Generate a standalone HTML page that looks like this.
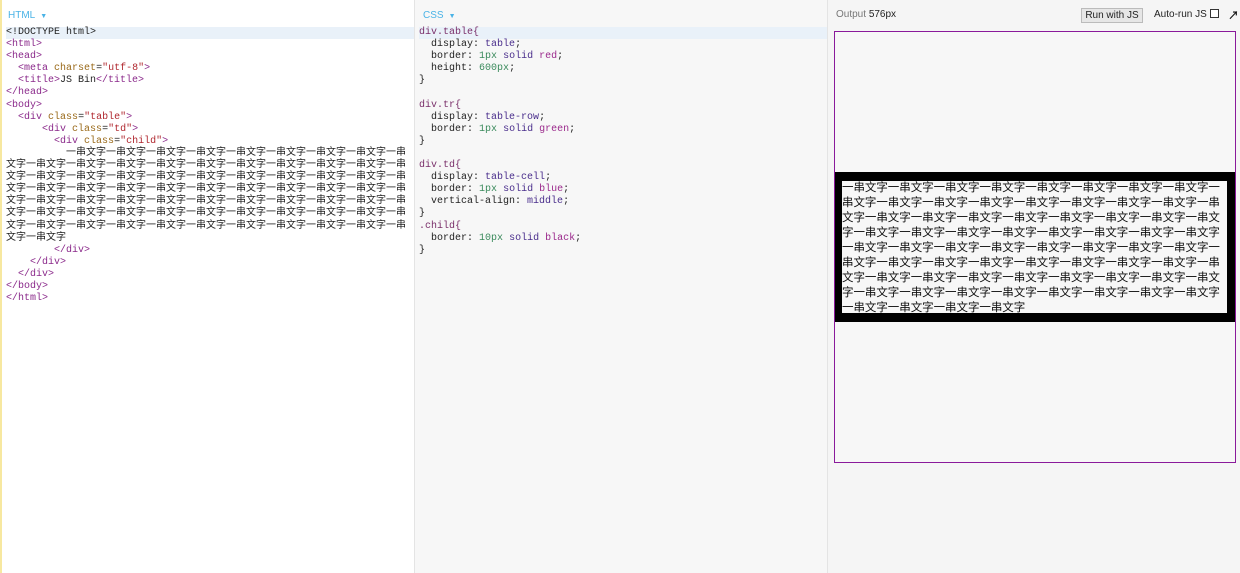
<!DOCTYPE html>
<html><head><meta charset="utf-8">
<style>
*{margin:0;padding:0;box-sizing:border-box}
body{width:1240px;height:573px;overflow:hidden;background:#fff;position:relative;font-family:"Liberation Sans","Noto Sans CJK SC",sans-serif}
.pane{position:absolute;top:0;height:573px}
#h{left:0;width:414px;background:#fff;border-left:2px solid #f7e8a0}
#c{left:414px;width:413px;background:#f7f7f7;border-left:1px solid #e4e4e4}
#o{left:827px;width:413px;background:#f5f5f5;border-left:1px solid #e4e4e4}
.lbl{position:absolute;top:10px;font-size:10px;color:#4ab3e6}
.lbl small{font-size:7px;margin-left:5px}
pre{position:absolute;top:27px;left:0;right:0;font-family:"Liberation Mono","Noto Sans CJK SC",monospace;font-size:10px;line-height:12.1px;color:#222;white-space:pre}
.hl{background:#e9f1f9;display:block}
.t{color:#8b2a8b}.a{color:#9a6a1a}.s{color:#b0282f}
.p{color:#222}.k{color:#4a2e8c}.n{color:#3a8a5c}.v{color:#9b2a8c}.sel{color:#7a2f6a}
.cjk{font-size:10px}
#frame{position:absolute;left:6px;top:31px;width:402px;height:432px;border:1px solid #8a1a9b;background:#f7f7f7}
#child{position:absolute;left:0;top:140px;width:400px;height:150px;border:9px solid #000;border-left-width:7px;border-right-width:8px;background:#f7f7f7;padding:0}
#child div{font-size:11.5px;line-height:15px;white-space:nowrap;color:#111;letter-spacing:-0.05px}
.btn{position:absolute;left:253px;top:8px;width:62px;height:15px;border:1px solid #bbb;background:#e6e6e6;font-size:10px;text-align:center;line-height:13px;color:#222}
</style></head><body>
<div class="pane" id="h">
<div class="lbl" style="left:6px">HTML<small>▼</small></div>
<pre style="left:4px"><span class="hl"><span class="p">&lt;!DOCTYPE html&gt;</span></span><span class="t">&lt;html&gt;</span>
<span class="t">&lt;head&gt;</span>
  <span class="t">&lt;meta</span> <span class="a">charset</span>=<span class="s">"utf-8"</span><span class="t">&gt;</span>
  <span class="t">&lt;title&gt;</span>JS Bin<span class="t">&lt;/title&gt;</span>
<span class="t">&lt;/head&gt;</span>
<span class="t">&lt;body&gt;</span>
  <span class="t">&lt;div</span> <span class="a">class</span>=<span class="s">"table"</span><span class="t">&gt;</span>
      <span class="t">&lt;div</span> <span class="a">class</span>=<span class="s">"td"</span><span class="t">&gt;</span>
        <span class="t">&lt;div</span> <span class="a">class</span>=<span class="s">"child"</span><span class="t">&gt;</span>
          <span class="cjk">一串文字一串文字一串文字一串文字一串文字一串文字一串文字一串文字一串</span>
<span class="cjk">文字一串文字一串文字一串文字一串文字一串文字一串文字一串文字一串文字一串文字一串</span>
<span class="cjk">文字一串文字一串文字一串文字一串文字一串文字一串文字一串文字一串文字一串文字一串</span>
<span class="cjk">文字一串文字一串文字一串文字一串文字一串文字一串文字一串文字一串文字一串文字一串</span>
<span class="cjk">文字一串文字一串文字一串文字一串文字一串文字一串文字一串文字一串文字一串文字一串</span>
<span class="cjk">文字一串文字一串文字一串文字一串文字一串文字一串文字一串文字一串文字一串文字一串</span>
<span class="cjk">文字一串文字一串文字一串文字一串文字一串文字一串文字一串文字一串文字一串文字一串</span>
<span class="cjk">文字一串文字</span>
        <span class="t">&lt;/div&gt;</span>
    <span class="t">&lt;/div&gt;</span>
  <span class="t">&lt;/div&gt;</span>
<span class="t">&lt;/body&gt;</span>
<span class="t">&lt;/html&gt;</span></pre>
</div>
<div class="pane" id="c">
<div class="lbl" style="left:8px">CSS<small>▼</small></div>
<pre style="left:4px"><span class="hl"><span class="sel">div.table{</span></span>  <span class="p">display</span>: <span class="k">table</span>;
  <span class="p">border</span>: <span class="n">1px</span> <span class="k">solid</span> <span class="v">red</span>;
  <span class="p">height</span>: <span class="n">600px</span>;
}

<span class="sel">div.tr{</span>
  <span class="p">display</span>: <span class="k">table-row</span>;
  <span class="p">border</span>: <span class="n">1px</span> <span class="k">solid</span> <span class="v">green</span>;
}

<span class="sel">div.td{</span>
  <span class="p">display</span>: <span class="k">table-cell</span>;
  <span class="p">border</span>: <span class="n">1px</span> <span class="k">solid</span> <span class="v">blue</span>;
  <span class="p">vertical-align</span>: <span class="k">middle</span>;
}
<span class="sel">.child{</span>
  <span class="p">border</span>: <span class="n">10px</span> <span class="k">solid</span> <span class="v">black</span>;
}</pre>
</div>
<div class="pane" id="o">
<div style="position:absolute;left:8px;top:9px;font-size:10px;color:#777">Output <span style="color:#222">576px</span></div>
<div class="btn">Run with JS</div>
<div style="position:absolute;left:326px;top:9px;font-size:10px;color:#222">Auto-run JS <span style="display:inline-block;width:9px;height:9px;border:1px solid #333;vertical-align:-1px;background:#fff"></span></div>
<div style="position:absolute;left:400px;top:7px;font-size:11px;font-weight:bold;color:#111">↗</div>
<div id="frame">
<div id="child">
<div>一串文字一串文字一串文字一串文字一串文字一串文字一串文字一串文字一</div>
<div>串文字一串文字一串文字一串文字一串文字一串文字一串文字一串文字一串</div>
<div>文字一串文字一串文字一串文字一串文字一串文字一串文字一串文字一串文</div>
<div>字一串文字一串文字一串文字一串文字一串文字一串文字一串文字一串文字</div>
<div>一串文字一串文字一串文字一串文字一串文字一串文字一串文字一串文字一</div>
<div>串文字一串文字一串文字一串文字一串文字一串文字一串文字一串文字一串</div>
<div>文字一串文字一串文字一串文字一串文字一串文字一串文字一串文字一串文</div>
<div>字一串文字一串文字一串文字一串文字一串文字一串文字一串文字一串文字</div>
<div>一串文字一串文字一串文字一串文字</div>
</div>
</div>
</div>
</body></html>
